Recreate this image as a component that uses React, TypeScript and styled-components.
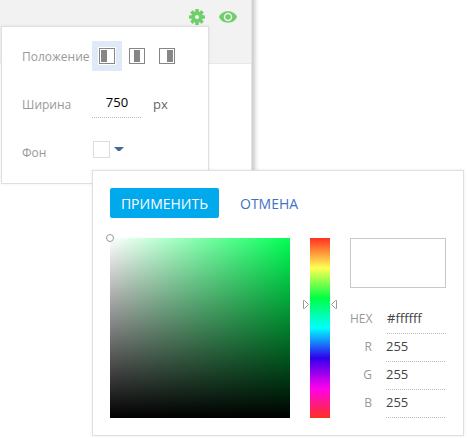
import React from "react";
import styled, { createGlobalStyle } from "styled-components";

const GlobalStyle = createGlobalStyle`
  * { box-sizing: border-box; }
  body { margin: 0; background: #fff; overflow: hidden; font-family: "Open Sans", "Noto Sans", sans-serif; }
  button, input { font: inherit; padding: 0; margin: 0; border: 0; background: none; border-radius: 0; outline: 0; }
`;

const Page = styled.main`
  position: relative;
  width: 467px;
  height: 438px;
  overflow: hidden;
  background: #fff;
`;

const Sidebar = styled.section`
  width: 252px;
  height: 438px;
  background: linear-gradient(#fff, #fff) 0 0 / 252px 175px no-repeat;
`;

const SidebarShade = styled.div`
  position: absolute;
  left: 251px;
  top: 0;
  width: 9px;
  height: 180px;
  background: linear-gradient(90deg, #e4e4e4 0 1px, #cecece 1px, #d9d9d9 3px, #eee 5px, #fafafa 7px, #fff 9px);
`;

const Header = styled.header`
  display: flex;
  justify-content: flex-end;
  gap: 14px;
  width: 251px;
  height: 64px;
  padding: 9px 14px 0 0;
  background: #f2f2f2;
  border-bottom: 1px solid #e8e8e8;
`;

const panelBorder = `
  background: #fff;
  border: 1px solid #dfdfdf;
  box-shadow: 0 0 3px rgba(0, 0, 0, 0.08);
`;

const SettingsPanel = styled.section`
  position: absolute;
  left: 1px;
  top: 26px;
  width: 208px;
  height: 158px;
  padding: 14px 0 0 20px;
  display: flex;
  flex-direction: column;
  gap: 18px;
  ${panelBorder}
`;

const SettingRow = styled.div`
  display: flex;
  height: 30px;
`;

const Label = styled.span`
  width: 70px;
  flex: none;
  white-space: nowrap;
  font-size: 12px;
  line-height: 31px;
  color: #999;
`;

const AlignButton = styled.button<{ $active?: boolean }>`
  display: grid;
  place-items: center;
  width: 30px;
  height: 30px;
  background: ${(p) => (p.$active ? "#dfe9f8" : "transparent")};
`;

const AlignIcon = styled.span<{ $offset: number }>`
  display: block;
  width: 16px;
  height: 16px;
  padding: 1px 0 0 ${(p) => p.$offset}px;
  border: 1px solid #868686;
  background: #fff;
  box-shadow: 0 0 0 1px #fff;

  &::before {
    content: "";
    display: block;
    width: 6px;
    height: 12px;
    background: #868686;
  }
`;

const dots = `
  background: repeating-linear-gradient(90deg, #bbb 0 1px, transparent 1px 2px) left bottom / 100% 1px no-repeat;
`;

const WidthInput = styled.input`
  width: 50px;
  height: 29px;
  padding-bottom: 3px;
  font-size: 13px;
  text-align: center;
  color: #000;
  ${dots}
`;

const Unit = styled.span`
  margin-left: 11px;
  font-size: 13px;
  line-height: 30px;
  color: #666;
`;

const SwatchButton = styled.button`
  display: flex;
  height: 17px;
  margin: 4px 0 0 1px;
  gap: 4px;
`;

const Swatch = styled.span`
  width: 17px;
  height: 17px;
  border: 1px solid #ddd;
`;

const PickerPanel = styled.section`
  position: absolute;
  left: 92px;
  top: 170px;
  width: 372px;
  height: 266px;
  padding: 17px;
  ${panelBorder}
`;

const Actions = styled.div`
  display: flex;
  gap: 21px;
  height: 50px;
`;

const ApplyButton = styled.button`
  width: 109px;
  height: 30px;
  border-radius: 2px;
  background: #00a8ec;
  color: #fff;
  font-size: 14px;
  line-height: 31px;
`;

const CancelButton = styled.button`
  height: 30px;
  color: #4272c4;
  font-size: 14px;
  line-height: 31px;
`;

const PickerBody = styled.div`
  display: flex;
  gap: 20px;
`;

const ShadeField = styled.div`
  position: relative;
  width: 180px;
  height: 180px;
  background: linear-gradient(transparent, #000), linear-gradient(90deg, #fff, #00ff55);
`;

const ShadeHandle = styled.span`
  position: absolute;
  left: -4px;
  top: -4px;
  width: 8px;
  height: 8px;
  border: 1px solid #999;
  border-radius: 50%;
  background: #fff;
`;

const HueBar = styled.div`
  position: relative;
  width: 20px;
  height: 180px;
  background: linear-gradient(#ff3020 0%, #ffff55 16.67%, #00ff44 33.33%, #00ffff 50%, #3000ee 66.67%, #ff00ee 83.33%, #ff3020 100%);
`;

const HueHandle = styled.svg`
  position: absolute;
  left: -7px;
  top: 62px;
  width: 34px;
  height: 9px;
`;

const Values = styled.div`
  width: 96px;
`;

const Preview = styled.div`
  width: 96px;
  height: 50px;
  margin-bottom: 18px;
  border: 1px solid #c8c8c8;
`;

const ValueRow = styled.label`
  display: flex;
  justify-content: space-between;
  height: 28px;
  font-size: 12px;
  line-height: 26px;
  color: #999;
`;

const ValueName = styled.span`
  width: 22px;
  text-align: right;
`;

const ValueInput = styled.input<{ $hex?: boolean }>`
  width: ${(p) => (p.$hex ? 59 : 60)}px;
  height: 28px;
  padding-bottom: 4px;
  font-size: 13px;
  color: #444;
  ${dots}
`;

const alignments = [
  { name: "left", offset: 1 },
  { name: "center", offset: 4 },
  { name: "right", offset: 7 },
];

const channels = [
  { name: "HEX", value: "#ffffff" },
  { name: "R", value: "255" },
  { name: "G", value: "255" },
  { name: "B", value: "255" },
];

function GearIcon() {
  return (
    <svg width="16" height="16" viewBox="0 0 16 16" fill="#6fcf6b">
      {[0, 45, 90, 135].map((angle) => (
        <rect key={angle} x="6.2" y="0" width="3.6" height="16" rx=".6" transform={`rotate(${angle} 8 8)`} />
      ))}
      <circle cx="8" cy="8" r="5.8" />
      <circle cx="8" cy="8" r="2.1" fill="#f2f2f2" />
    </svg>
  );
}

function EyeIcon() {
  return (
    <svg width="18" height="16" viewBox="0 0 18 16">
      <path d="M0 8C3 .4 15 .4 18 8C15 15.6 3 15.6 0 8Z" fill="#6fcf6b" />
      <circle cx="9" cy="8" r="3.5" fill="none" stroke="#f2f2f2" strokeWidth="1.5" />
    </svg>
  );
}

export default function App() {
  return (
    <>
      <GlobalStyle />
      <Page>
        <Sidebar>
          <Header>
            <GearIcon />
            <EyeIcon />
          </Header>
        </Sidebar>
        <SidebarShade />
        <SettingsPanel>
          <SettingRow>
            <Label>Положение</Label>
            {alignments.map((item, i) => (
              <AlignButton key={item.name} $active={i === 0} aria-label={item.name}>
                <AlignIcon $offset={item.offset} />
              </AlignButton>
            ))}
          </SettingRow>
          <SettingRow>
            <Label>Ширина</Label>
            <WidthInput defaultValue="750" />
            <Unit>px</Unit>
          </SettingRow>
          <SettingRow>
            <Label>Фон</Label>
            <SwatchButton>
              <Swatch />
              <svg width="10" height="17" viewBox="0 0 10 17">
                <path d="M0 6H10L6 10H4Z" fill="#416a9b" />
              </svg>
            </SwatchButton>
          </SettingRow>
        </SettingsPanel>
        <PickerPanel>
          <Actions>
            <ApplyButton>ПРИМЕНИТЬ</ApplyButton>
            <CancelButton>ОТМЕНА</CancelButton>
          </Actions>
          <PickerBody>
            <ShadeField>
              <ShadeHandle />
            </ShadeField>
            <HueBar>
              <HueHandle viewBox="0 0 34 9" fill="#fff" stroke="#999" strokeWidth="1">
                <path d="M.5 .5H1.5L5.5 4.5L1.5 8.5H.5Z" />
                <path d="M33.5 .5H32.5L28.5 4.5L32.5 8.5H33.5Z" />
              </HueHandle>
            </HueBar>
            <Values>
              <Preview />
              {channels.map((channel) => (
                <ValueRow key={channel.name}>
                  <ValueName>{channel.name}</ValueName>
                  <ValueInput $hex={channel.name === "HEX"} defaultValue={channel.value} />
                </ValueRow>
              ))}
            </Values>
          </PickerBody>
        </PickerPanel>
      </Page>
    </>
  );
}
